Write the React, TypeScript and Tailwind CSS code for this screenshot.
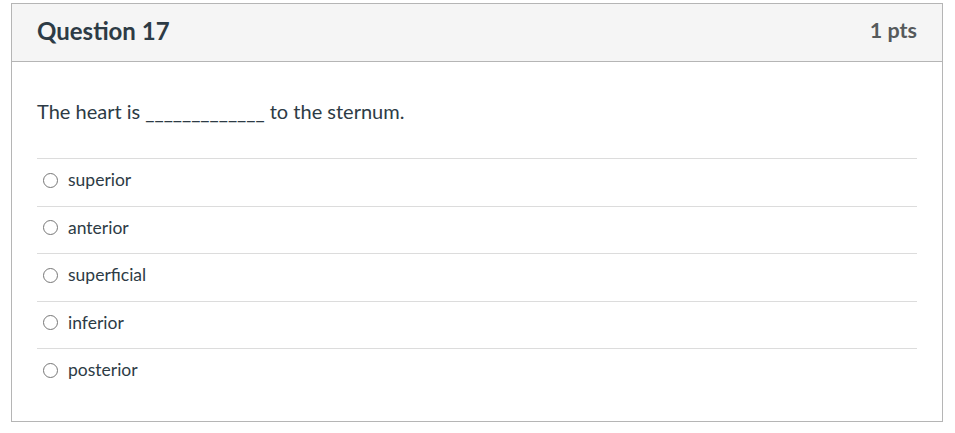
const options = ['superior', 'anterior', 'superficial', 'inferior', 'posterior'];

const App = () => {
  return (
    <div className="w-[955px] h-[433px] bg-white pt-[3px] pl-[11px] font-['Lato',sans-serif]">
      <div className="w-[932px] h-[419px] border border-[#b5b5b5] bg-white">
        <div className="h-[58px] bg-[#f5f5f5] border-b border-[#b5b5b5] px-[25px] pb-[4px] flex items-center justify-between">
          <h2 className="text-[24px] font-bold text-[#2d3b45] leading-none">Question 17</h2>
          <div className="text-[21.5px] font-bold text-[#565a5c] leading-none">1 pts</div>
        </div>
        <div className="px-[25px] pt-[35px]">
          <p className="text-[20px] leading-[28px] text-[#2d3b45]">
            The heart is _____________ to the sternum.
          </p>
          <div className="mt-[33px]">
            {options.map((opt) => (
              <label
                key={opt}
                className="flex items-center gap-[10px] h-[47.5px] border-t border-[#dcdcdc] pl-[6px] pb-[4px]"
              >
                <span className="w-[15px] h-[15px] rounded-full border border-[#777] bg-white shrink-0" />
                <span className="text-[17.5px] text-[#2d3b45]">{opt}</span>
              </label>
            ))}
          </div>
        </div>
      </div>
    </div>
  );
};

export default App;
